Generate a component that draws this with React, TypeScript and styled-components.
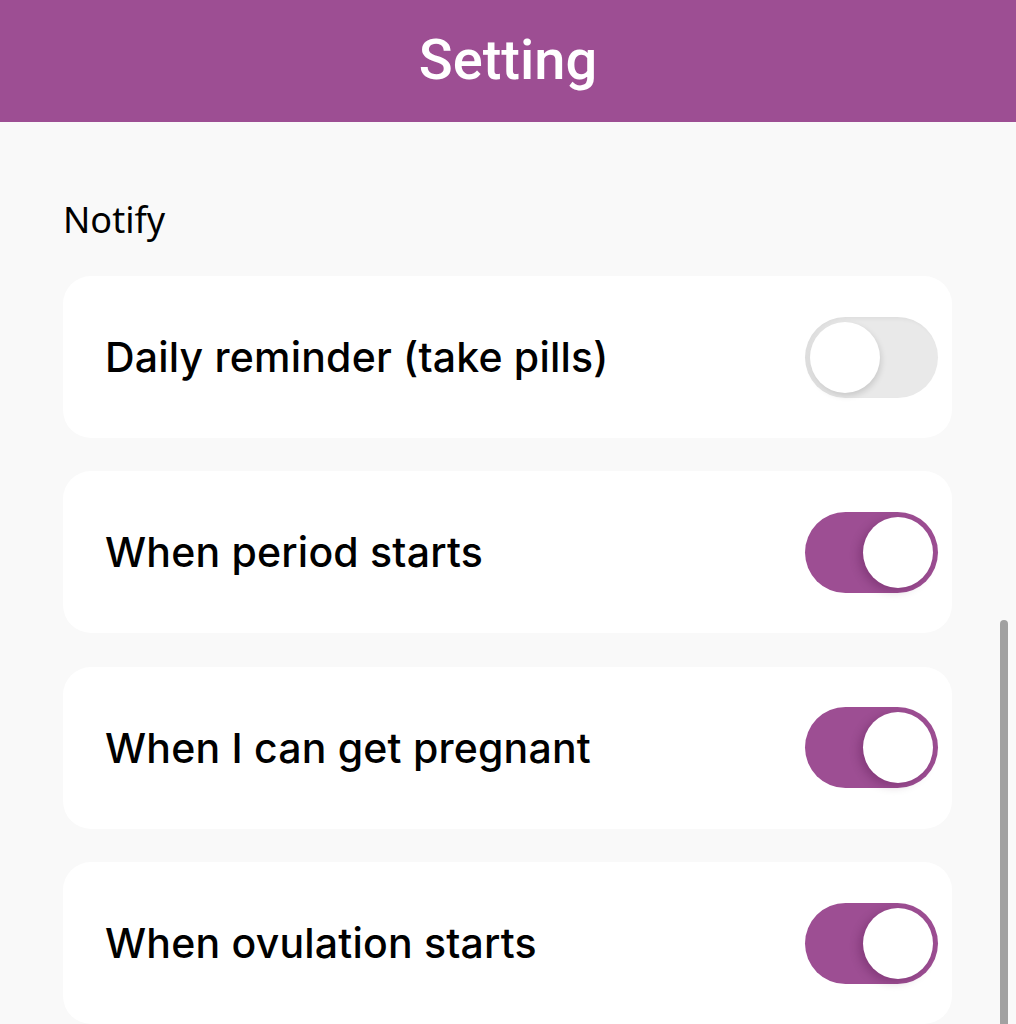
import { useState } from "react";
import styled, { createGlobalStyle } from "styled-components";

const GlobalStyle = createGlobalStyle`
  html, body {
    margin: 0;
    padding: 0;
    background: #f9f9f9;
    overflow: hidden;
  }
  * {
    box-sizing: border-box;
  }
`;

const PURPLE = "#9d4e93";

const Page = styled.div`
  width: 1016px;
  min-height: 1024px;
  background: #f9f9f9;
`;

const Header = styled.header`
  height: 122px;
  background: ${PURPLE};
  display: flex;
  align-items: center;
  justify-content: center;
`;

const Title = styled.h1`
  margin: 0;
  color: #fff;
  font-family: Roboto, "Noto Sans", sans-serif;
  font-weight: 500;
  font-size: 56px;
  line-height: 1;
  padding-bottom: 2px;
`;

const Content = styled.main`
  padding: 80px 64px 0 63px;
`;

const SectionLabel = styled.div`
  font-family: "Noto Sans", "Open Sans", sans-serif;
  font-size: 36px;
  line-height: 1;
  color: #000;
  margin-bottom: 38px;
`;

const List = styled.div`
  display: flex;
  flex-direction: column;
  gap: 33.4px;
`;

const Card = styled.div`
  height: 162px;
  background: #fff;
  border-radius: 28px;
  display: flex;
  align-items: center;
  justify-content: space-between;
  padding: 0 14px 0 42px;
`;

const Label = styled.span`
  font-family: Inter, "Noto Sans", sans-serif;
  font-weight: 500;
  font-size: 41px;
  letter-spacing: 0.2px;
  color: #000;
`;

const Track = styled.button<{ $on: boolean }>`
  position: relative;
  width: 133px;
  height: 81px;
  border: none;
  padding: 0;
  border-radius: 41px;
  cursor: pointer;
  background: ${(p) => (p.$on ? PURPLE : "#e9e9e9")};
  box-shadow: ${(p) => (p.$on ? "none" : "inset 3px 2px 4px rgba(0,0,0,0.05)")};
  transition: background 0.2s;
`;

const Knob = styled.span<{ $on: boolean }>`
  position: absolute;
  top: 5px;
  left: ${(p) => (p.$on ? "58px" : "5px")};
  width: 70px;
  height: 71px;
  border-radius: 50%;
  background: #fff;
  box-shadow: ${(p) =>
    p.$on
      ? "-4px 3px 10px rgba(60, 0, 50, 0.25)"
      : "1px 3px 6px rgba(0, 0, 0, 0.14)"};
  transition: left 0.2s;
`;

const ScrollThumb = styled.div`
  position: fixed;
  left: 1000px;
  top: 620px;
  width: 8px;
  height: 420px;
  border-radius: 4px;
  background: #a1a1a1;
`;

const Toggle = ({ on, onClick }: { on: boolean; onClick: () => void }) => (
  <Track $on={on} onClick={onClick} aria-pressed={on}>
    <Knob $on={on} />
  </Track>
);

const initial = [
  { label: "Daily reminder (take pills)", on: false },
  { label: "When period starts", on: true },
  { label: "When I can get pregnant", on: true },
  { label: "When ovulation starts", on: true },
];

const App = () => {
  const [items, setItems] = useState(initial);

  const flip = (i: number) => {
    setItems(items.map((it, idx) => (idx === i ? { ...it, on: !it.on } : it)));
  };

  return (
    <Page>
      <GlobalStyle />
      <Header>
        <Title>Setting</Title>
      </Header>
      <Content>
        <SectionLabel>Notify</SectionLabel>
        <List>
          {items.map((it, i) => (
            <Card key={it.label}>
              <Label>{it.label}</Label>
              <Toggle on={it.on} onClick={() => flip(i)} />
            </Card>
          ))}
        </List>
      </Content>
      <ScrollThumb />
    </Page>
  );
};

export default App;
